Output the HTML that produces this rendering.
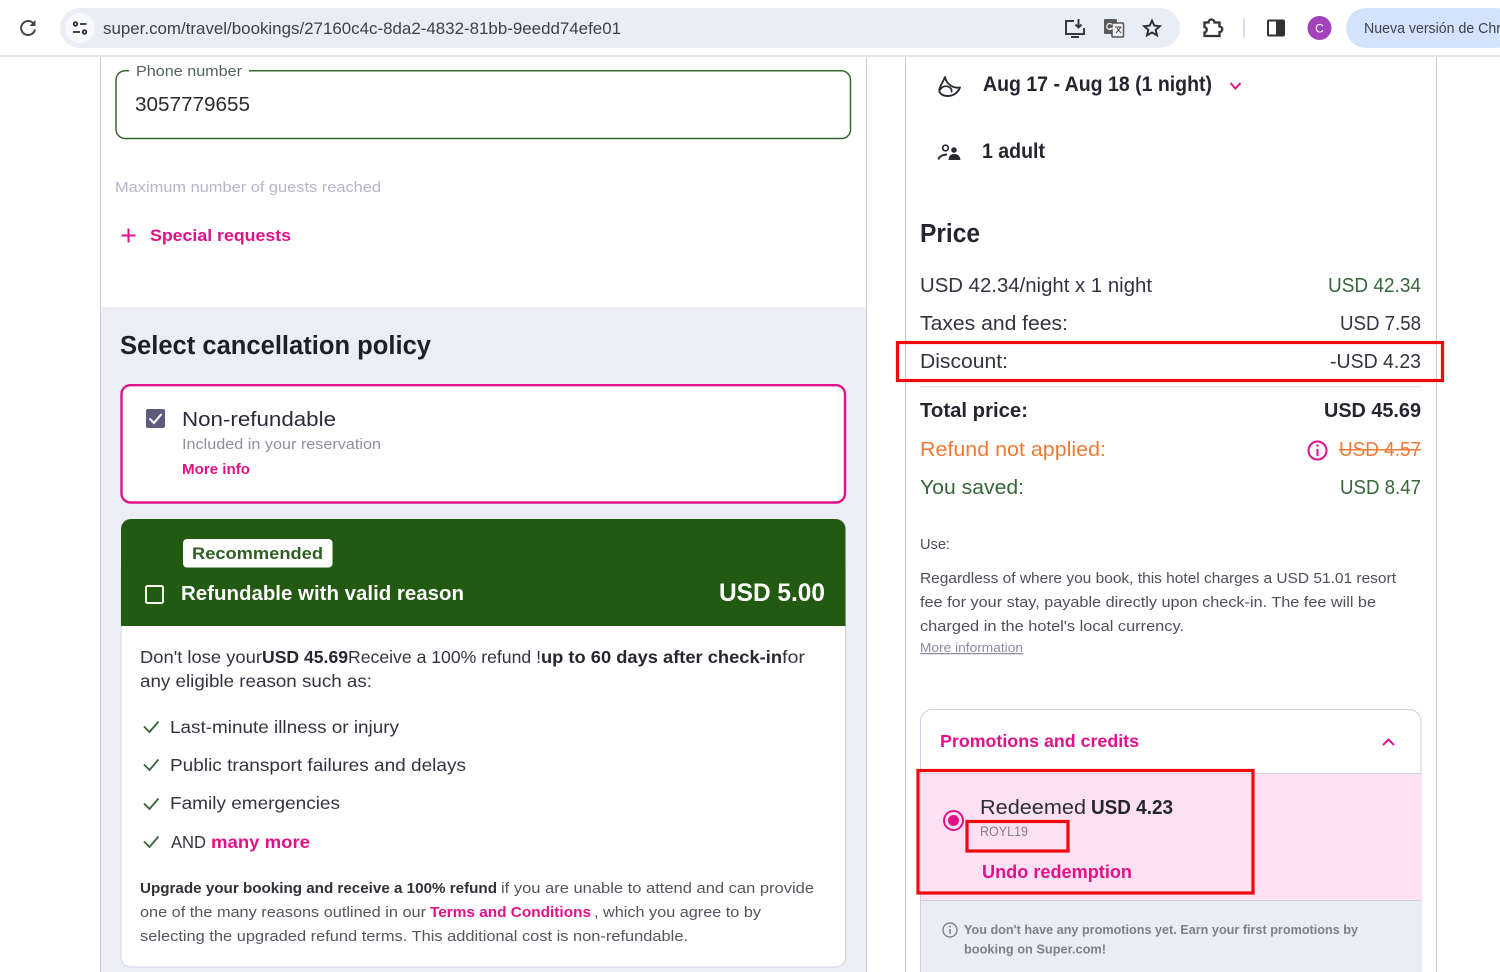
<!DOCTYPE html>
<html lang="en"><head><meta charset="utf-8"><title>Super.com booking</title>
<style>
html,body{margin:0;padding:0;background:#fff;width:1500px;height:972px;overflow:hidden}
svg{display:block}
text{font-family:"Liberation Sans",sans-serif;white-space:pre}
.b{font-weight:700}
.p{fill:#e0128a}
.d{fill:#33333f}
.g{fill:#38663a}
</style></head><body>
<svg xmlns="http://www.w3.org/2000/svg" width="1500" height="972" viewBox="0 0 1500 972">
<rect width="1500" height="972" fill="#fff"/>
<!-- panels -->
<rect x="100" y="307" width="767" height="665" fill="#ecedf5"/>
<path d="M100.500 56V972M866.500 56V972M905.500 56V972M1436.500 56V972" stroke="#c9cbdd" stroke-width="1" fill="none"/>
<!-- browser bar -->
<rect x="0" y="55" width="1500" height="2" fill="#e6e6e8"/>
<rect x="60" y="8" width="1120" height="40" rx="20" fill="#e9edf6"/>
<circle cx="80" cy="28" r="15" fill="#f7f8fc"/>
<rect x="1346" y="8" width="170" height="40" rx="20" fill="#d3e3fd"/>
<path d="M33.500 23.500A7 7 0 1 0 35 29.500" fill="none" stroke="#444" stroke-width="2"/>
<path d="M35.500 20V26H29.500Z" fill="#444"/>
<g fill="none" stroke="#333" stroke-width="1.800"><circle cx="75.500" cy="24" r="1.800"/><path d="M80 24H86.500"/><path d="M73 32H80"/><circle cx="84.500" cy="32" r="1.800"/></g>
<text x="103" y="34" font-size="16.500" fill="#3f4146" textLength="518" lengthAdjust="spacingAndGlyphs">super.com/travel/bookings/27160c4c-8da2-4832-81bb-9eedd74efe01</text>
<g fill="none" stroke="#3a3a3a" stroke-width="2">
<path d="M1074 21H1066V34H1084V28"/><path d="M1071 37H1079"/><path d="M1078.500 19V27M1075.500 24.500L1078.500 27.500L1081.500 24.500"/>
</g>
<rect x="1104" y="19" width="13" height="15" rx="1" fill="#5a5a5a"/><rect x="1112" y="23" width="11.500" height="14" rx="1" fill="#eef0f6" stroke="#555" stroke-width="1.500"/>
<path d="M1115 27H1121M1116 33L1121 27M1117 28L1121 33" stroke="#444" fill="none" stroke-width="1"/>
<path d="M1112 24.500A3 3 0 1 0 1112 28.500H1109.500" fill="none" stroke="#eee" stroke-width="1.200"/>
<path d="M1152 20.500L1154.300 25.600L1159.800 26.200L1155.700 29.900L1156.900 35.300L1152 32.500L1147.100 35.300L1148.300 29.900L1144.200 26.200L1149.700 25.600Z" fill="none" stroke="#333" stroke-width="2"/>
<path d="M1204.500 22.500H1208.500A3 3 0 0 1 1214.500 22.500H1219.500V26.500A2.500 2.500 0 0 1 1219.500 32V36H1204.500V32.500A2.800 2.800 0 0 0 1204.500 27Z" fill="none" stroke="#333" stroke-width="2.300"/>
<rect x="1243" y="19" width="2" height="18" fill="#cfdff3"/>
<rect x="1268" y="20.500" width="16" height="15" rx="1" fill="#fff" stroke="#333" stroke-width="2"/><rect x="1276" y="20" width="8" height="16" fill="#333"/>
<circle cx="1319.500" cy="28" r="12" fill="#a443b9"/>
<text x="1319.500" y="32.500" font-size="12" fill="#fff" text-anchor="middle">C</text>
<text x="1364" y="33" font-size="14.500" fill="#3f4248" textLength="137" lengthAdjust="spacingAndGlyphs">Nueva versión de Chr</text>

<!-- phone -->
<path d="M129 70.700H125A9.300 9.300 0 0 0 116 80V129A9.300 9.300 0 0 0 125 138.500H842A9 9 0 0 0 850.500 129V80A9.300 9.300 0 0 0 842 70.700H249" fill="none" stroke="#34682a" stroke-width="1.500"/>
<text x="136" y="76" font-size="14.500" fill="#55625a" textLength="106" lengthAdjust="spacingAndGlyphs">Phone number</text>
<text x="135" y="111" font-size="20.500" fill="#2c2c30" textLength="115" lengthAdjust="spacingAndGlyphs">3057779655</text>
<text x="115" y="192" font-size="15" fill="#b5b5ca" textLength="266" lengthAdjust="spacingAndGlyphs">Maximum number of guests reached</text>
<path d="M128.500 228.500V242.500M121.500 235.500H135.500" stroke="#e0128a" stroke-width="2" fill="none"/>
<text x="150" y="241" font-size="17" class="b p" textLength="141" lengthAdjust="spacingAndGlyphs">Special requests</text>

<!-- cancellation -->
<text x="120" y="354" font-size="25.500" class="b" fill="#1f1f29" textLength="311" lengthAdjust="spacingAndGlyphs">Select cancellation policy</text>
<rect x="121.500" y="385.200" width="723.500" height="117.300" rx="9" fill="#fff" stroke="#e0128a" stroke-width="2.400"/>
<rect x="146" y="409" width="19" height="19" rx="2" fill="#5e5c7c"/>
<path d="M149.500 418.500L154 423L161.500 414" fill="none" stroke="#fff" stroke-width="2"/>
<text x="182" y="426" font-size="20.500" fill="#2a2a3a" textLength="154" lengthAdjust="spacingAndGlyphs">Non-refundable</text>
<text x="182" y="449" font-size="15" fill="#8f8f9f" textLength="199" lengthAdjust="spacingAndGlyphs">Included in your reservation</text>
<text x="182" y="474" font-size="14.500" class="b p" textLength="68" lengthAdjust="spacingAndGlyphs">More info</text>

<!-- recommended card -->
<rect x="121" y="560" width="724.500" height="407" rx="10" fill="#fff" stroke="#d2d5e6" stroke-width="1"/>
<path d="M121 626V529A10 10 0 0 1 131 519H835.500A10 10 0 0 1 845.500 529V626Z" fill="#235a12"/>
<rect x="183" y="539" width="149.500" height="28.500" rx="4" fill="#fff"/>
<text x="192" y="559" font-size="17" class="b" fill="#2f5f22" textLength="131" lengthAdjust="spacingAndGlyphs">Recommended</text>
<rect x="146" y="586" width="17" height="17" rx="1.500" fill="none" stroke="#f3f6ee" stroke-width="2"/>
<text x="181" y="600" font-size="20" class="b" fill="#fff" textLength="283" lengthAdjust="spacingAndGlyphs">Refundable with valid reason</text>
<text x="719" y="601" font-size="25" class="b" fill="#fff" textLength="106" lengthAdjust="spacingAndGlyphs">USD 5.00</text>

<g font-size="17.500">
<text x="140" y="663" class="d" textLength="122" lengthAdjust="spacingAndGlyphs">Don't lose your</text>
<text x="262" y="663" class="b" fill="#26262f" textLength="86" lengthAdjust="spacingAndGlyphs">USD 45.69</text>
<text x="348" y="663" class="d" textLength="193" lengthAdjust="spacingAndGlyphs">Receive a 100% refund !</text>
<text x="541" y="663" class="b" fill="#26262f" textLength="241" lengthAdjust="spacingAndGlyphs">up to 60 days after check-in</text>
<text x="782" y="663" class="d" textLength="23" lengthAdjust="spacingAndGlyphs">for</text>
<text x="140" y="687" class="d" textLength="232" lengthAdjust="spacingAndGlyphs">any eligible reason such as:</text>
<text x="170" y="733" class="d" textLength="229" lengthAdjust="spacingAndGlyphs">Last-minute illness or injury</text>
<text x="170" y="771" class="d" textLength="296" lengthAdjust="spacingAndGlyphs">Public transport failures and delays</text>
<text x="170" y="809" class="d" textLength="170" lengthAdjust="spacingAndGlyphs">Family emergencies</text>
<text x="171" y="848" class="d" textLength="35" lengthAdjust="spacingAndGlyphs">AND</text>
<text x="211" y="848" class="b p" textLength="99" lengthAdjust="spacingAndGlyphs">many more</text>
</g>
<g fill="none" stroke="#38663a" stroke-width="1.800">
<path d="M144 726.500L149.500 732L158.500 721.500"/><path d="M144 764.500L149.500 770L158.500 759.500"/><path d="M144 803.500L149.500 809L158.500 798.500"/><path d="M144 841.500L149.500 847L158.500 836.500"/>
</g>
<g font-size="15">
<text x="140" y="893" class="b" fill="#303038" textLength="357" lengthAdjust="spacingAndGlyphs">Upgrade your booking and receive a 100% refund</text>
<text x="501" y="893" fill="#55555f" textLength="313" lengthAdjust="spacingAndGlyphs">if you are unable to attend and can provide</text>
<text x="140" y="917" fill="#55555f" textLength="286" lengthAdjust="spacingAndGlyphs">one of the many reasons outlined in our</text>
<text x="430" y="917" class="b p" textLength="161" lengthAdjust="spacingAndGlyphs">Terms and Conditions</text>
<text x="594" y="917" fill="#55555f" textLength="167" lengthAdjust="spacingAndGlyphs">, which you agree to by</text>
<text x="140" y="941" fill="#55555f" textLength="548" lengthAdjust="spacingAndGlyphs">selecting the upgraded refund terms. This additional cost is non-refundable.</text>
</g>

<!-- right column -->
<path d="M945 77C943.500 81 940.500 85 939.500 89C938.500 93 942 96 948 96C953.500 96 958 92.500 960 87.500C954 88.500 946.500 85 945 77Z" fill="none" stroke="#2b2b33" stroke-width="1.900" stroke-linejoin="round"/>
<path d="M940 90C942 86 946.500 85.500 949 87C951 88 952 90 951.500 92.500" fill="none" stroke="#2b2b33" stroke-width="1.700"/>
<text x="983" y="91" font-size="21" class="b" fill="#25252f" textLength="229" lengthAdjust="spacingAndGlyphs">Aug 17 - Aug 18 (1 night)</text>
<path d="M1230.500 83L1235.500 88.500L1240.500 83" fill="none" stroke="#e0128a" stroke-width="2"/>
<circle cx="945.500" cy="148" r="2.800" fill="none" stroke="#2b2b33" stroke-width="1.700"/>
<circle cx="954" cy="150" r="2.800" fill="#2b2b33"/>
<path d="M938.500 159.500C939 156.500 942 155 947 154.500" fill="none" stroke="#2b2b33" stroke-width="1.900"/>
<path d="M948.500 160C949 155 951 154 954.500 154C958 154 960 156 960.500 160Z" fill="#2b2b33"/>
<text x="982" y="158" font-size="21" class="b" fill="#25252f" textLength="63" lengthAdjust="spacingAndGlyphs">1 adult</text>
<text x="920" y="242" font-size="25.500" class="b" fill="#25252f" textLength="60" lengthAdjust="spacingAndGlyphs">Price</text>
<g font-size="20">
<text x="920" y="292" class="d" textLength="232" lengthAdjust="spacingAndGlyphs">USD 42.34/night x 1 night</text>
<text x="1328" y="292" class="g" textLength="93" lengthAdjust="spacingAndGlyphs">USD 42.34</text>
<text x="920" y="330" class="d" textLength="148" lengthAdjust="spacingAndGlyphs">Taxes and fees:</text>
<text x="1340" y="330" class="d" textLength="81" lengthAdjust="spacingAndGlyphs">USD 7.58</text>
<text x="920" y="368" class="d" textLength="88" lengthAdjust="spacingAndGlyphs">Discount:</text>
<text x="1330" y="368" class="d" textLength="91" lengthAdjust="spacingAndGlyphs">-USD 4.23</text>
<text x="920" y="417" class="b" fill="#25252f" textLength="108" lengthAdjust="spacingAndGlyphs">Total price:</text>
<text x="1324" y="417" class="b" fill="#25252f" textLength="97" lengthAdjust="spacingAndGlyphs">USD 45.69</text>
<text x="920" y="456" fill="#ee7a35" textLength="186" lengthAdjust="spacingAndGlyphs">Refund not applied:</text>
<text x="1339" y="456" fill="#ee7a35" textLength="82" lengthAdjust="spacingAndGlyphs">USD 4.57</text>
<text x="920" y="494" class="g" textLength="104" lengthAdjust="spacingAndGlyphs">You saved:</text>
<text x="1340" y="494" class="g" textLength="81" lengthAdjust="spacingAndGlyphs">USD 8.47</text>
</g>
<rect x="1339" y="449" width="82" height="1.500" fill="#ee7a35"/>
<rect x="920" y="386" width="501" height="1.500" fill="#e4e6f0"/>
<circle cx="1317.500" cy="450.500" r="9" fill="none" stroke="#e0128a" stroke-width="2"/>
<path d="M1317.500 449V456" stroke="#e0128a" stroke-width="2"/><circle cx="1317.500" cy="445.500" r="1.200" fill="#e0128a"/>
<g font-size="14.500" fill="#4f4f5a">
<text x="920" y="549" textLength="30" lengthAdjust="spacingAndGlyphs">Use:</text>
<text x="920" y="583" textLength="476" lengthAdjust="spacingAndGlyphs">Regardless of where you book, this hotel charges a USD 51.01 resort</text>
<text x="920" y="607" textLength="456" lengthAdjust="spacingAndGlyphs">fee for your stay, payable directly upon check-in. The fee will be</text>
<text x="920" y="631" textLength="264" lengthAdjust="spacingAndGlyphs">charged in the hotel's local currency.</text>
</g>
<text x="920" y="652" font-size="12.500" fill="#8c8c9c" textLength="103" lengthAdjust="spacingAndGlyphs" text-decoration="underline">More information</text>

<!-- promotions -->
<path d="M920.500 972V721A12 12 0 0 1 932.500 709.500H1409A12 12 0 0 1 1421 721V972Z" fill="#fff" stroke="#cdcfdf" stroke-width="1"/>
<rect x="921" y="774" width="500" height="126" fill="#fde0f3"/>
<rect x="921" y="901" width="500" height="71" fill="#eaedf5"/>
<path d="M921 773.500H1421M921 900.500H1421" stroke="#cfd1e0" stroke-width="1"/>
<text x="940" y="747" font-size="17.500" class="b p" textLength="199" lengthAdjust="spacingAndGlyphs">Promotions and credits</text>
<path d="M1383 745L1388.500 739.500L1394 745" fill="none" stroke="#e0128a" stroke-width="2"/>
<circle cx="953.500" cy="820.500" r="9.500" fill="none" stroke="#e0128a" stroke-width="2"/>
<circle cx="953.500" cy="820.500" r="5.500" fill="#e0128a"/>
<text x="980" y="814" font-size="20" fill="#2e2e38" textLength="106" lengthAdjust="spacingAndGlyphs">Redeemed</text>
<text x="1091" y="814" font-size="20" class="b" fill="#25252f" textLength="82" lengthAdjust="spacingAndGlyphs">USD 4.23</text>
<text x="980" y="836" font-size="14" fill="#86808c" textLength="48" lengthAdjust="spacingAndGlyphs">ROYL19</text>
<text x="982" y="878" font-size="18" class="b p" textLength="150" lengthAdjust="spacingAndGlyphs">Undo redemption</text>
<circle cx="950" cy="930" r="7" fill="none" stroke="#77777f" stroke-width="1.300"/>
<path d="M950 929V934" stroke="#77777f" stroke-width="1.500"/><circle cx="950" cy="926.500" r="0.900" fill="#77777f"/>
<text x="964" y="934" font-size="13" class="b" fill="#7f7f8c" textLength="394" lengthAdjust="spacingAndGlyphs">You don't have any promotions yet. Earn your first promotions by</text>
<text x="964" y="953.500" font-size="13" class="b" fill="#7f7f8c" textLength="142" lengthAdjust="spacingAndGlyphs">booking on Super.com!</text>

<!-- red annotations -->
<g fill="none" stroke="#ef0a10" stroke-width="3.200">
<rect x="897.500" y="342.500" width="545" height="38"/>
<rect x="918" y="770.500" width="335" height="122.500"/>
<rect x="967" y="821.500" width="101" height="29.500"/>
</g>
</svg>
</body></html>
